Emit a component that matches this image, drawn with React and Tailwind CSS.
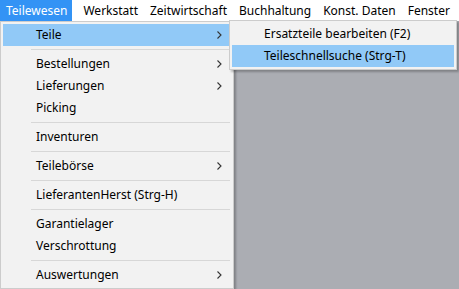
import React from "react";

const Chevron = () => (
  <svg width="5" height="8" viewBox="0 0 5 8" className="block">
    <path d="M0.5 0.5 L4 4 L0.5 7.5" fill="none" stroke="#333" strokeWidth="1.1" />
  </svg>
);

const Item = ({ label, sub, active, pl = "pl-[33px]" }) => (
  <div
    className={`h-[22px] flex items-center ${pl} pr-[9px] ${
      active ? "bg-[#91c9f7]" : ""
    }`}
  >
    <span className="flex-1 text-black">{label}</span>
    {sub && <Chevron />}
  </div>
);

const Sep = () => (
  <div className="h-[7px] flex items-center pl-[28px] pr-[1px]">
    <div className="h-px w-full bg-[#d7d7d7]" />
  </div>
);

export default function App() {
  const bar = ["Werkstatt", "Zeitwirtschaft", "Buchhaltung", "Konst. Daten", "Fenster"];
  return (
    <div
      className="relative w-[459px] h-[289px] flex flex-col bg-[#abadb3] text-[12px] overflow-hidden"
      style={{ fontFamily: '"Noto Sans", "Open Sans", sans-serif' }}
    >
      <div className="h-[21px] bg-white flex items-center">
        <div className="h-[21px] pl-[6px] pr-[5px] flex items-center bg-[#3393f5] text-white">Teilewesen</div>
        <div className="w-[5px]" />
        {bar.map((b) => (
          <div key={b} className="h-[21px] px-[6px] flex items-center text-black">
            {b}
          </div>
        ))}
      </div>
      <div className="flex-1" />

      <div className="absolute left-0 top-[21px] w-[234px] bg-[#f2f2f2] border border-[#cccccc] p-[2px] shadow-[2px_2px_2px_rgba(0,0,0,0.25)]">
        <Item label="Teile" sub active />
        <Sep />
        <Item label="Bestellungen" sub />
        <Item label="Lieferungen" sub />
        <Item label="Picking" />
        <Sep />
        <Item label="Inventuren" />
        <Sep />
        <Item label="Teilebörse" sub />
        <Sep />
        <Item label="LieferantenHerst (Strg-H)" />
        <Sep />
        <Item label="Garantielager" />
        <Item label="Verschrottung" />
        <Sep />
        <Item label="Auswertungen" sub />
      </div>

      <div className="absolute left-[229px] top-[20px] w-[228px] bg-[#f2f2f2] border border-[#cccccc] p-[2px] shadow-[2px_2px_2px_rgba(0,0,0,0.25)]">
        <Item label="Ersatzteile bearbeiten (F2)" pl="pl-[32px]" />
        <Item label="Teileschnellsuche (Strg-T)" active pl="pl-[32px]" />
      </div>
    </div>
  );
}
